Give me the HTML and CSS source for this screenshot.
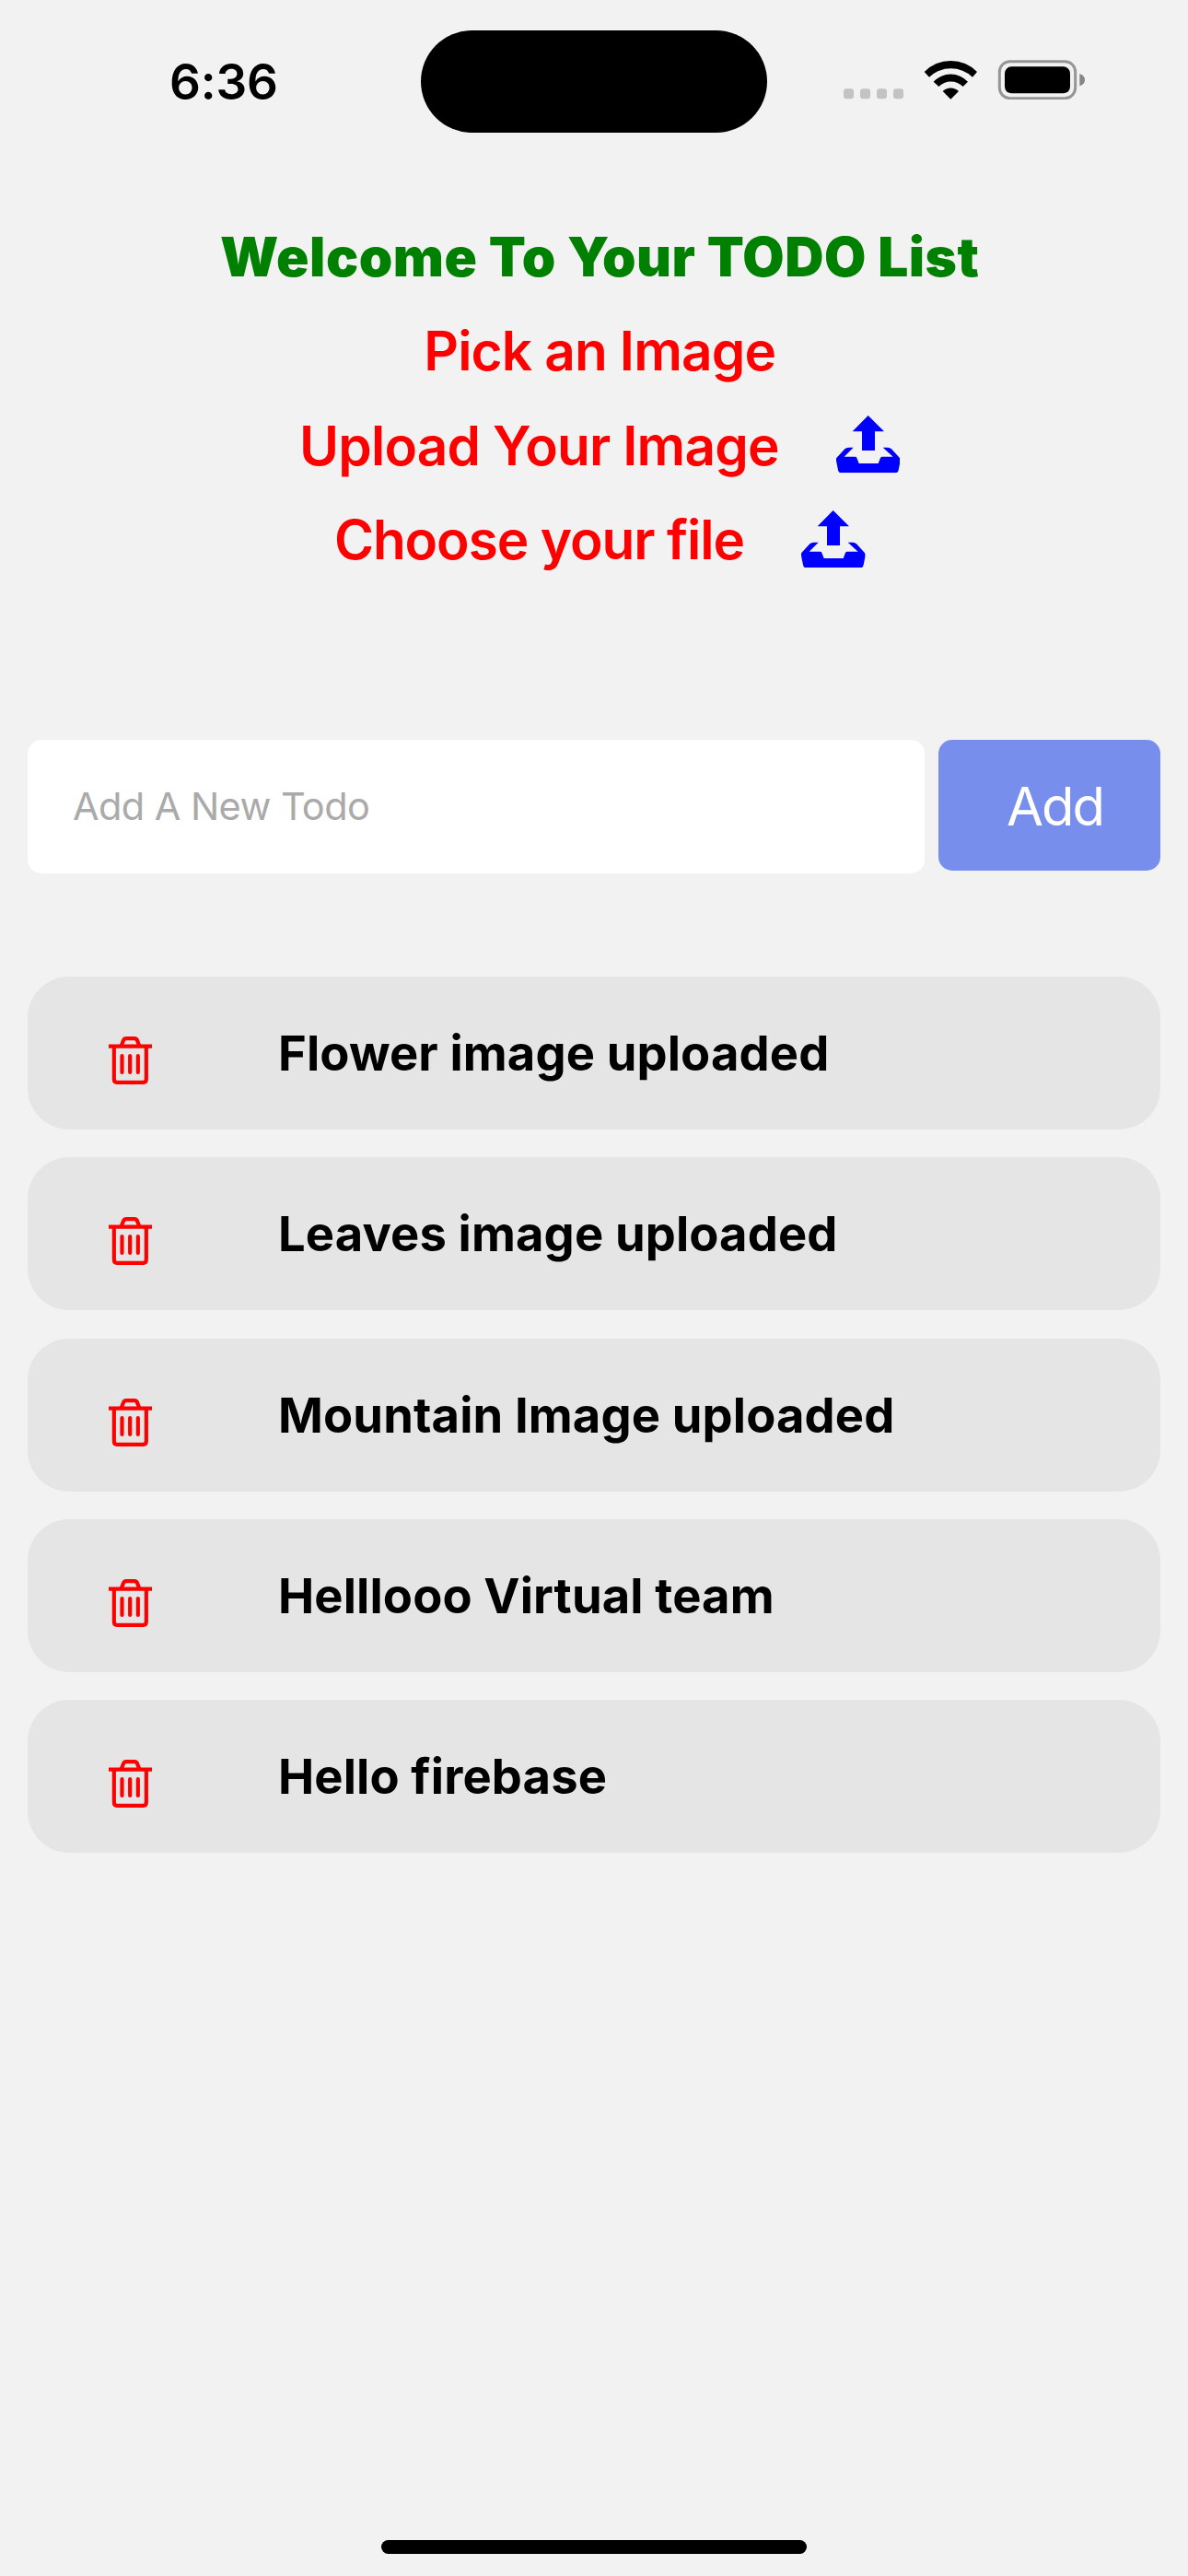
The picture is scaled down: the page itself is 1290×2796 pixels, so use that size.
FILE: index.html
```html
<!DOCTYPE html>
<html lang="en">
<head>
<meta charset="utf-8">
<title>TODO List</title>
<link rel="stylesheet" href="styles.css">
</head>
<body>
<svg class="defs" aria-hidden="true">
  <symbol id="upload" viewBox="0 0 209 187">
    <path d="M104 0L156 52H126V114H84V52H53ZM1 138L28 109Q33 104 40 104H56L26 134H62Q66 134 67 138L74 156H137L144 138Q146 134 150 134H185L152 104H168Q175 104 180 109L206 137Q210 142 209 148L203 178Q201 187 193 187H15Q8 187 6 178L0 148Q-1 142 1 138Z" fill="currentColor"/>
  </symbol>
  <symbol id="trash" viewBox="84 75 141 156">
    <g fill="none" stroke="currentColor" stroke-width="12.5">
      <path d="M84 107H225"/>
      <path d="M101.500 107V213Q101.500 224.500 111 224.500H197Q206.500 224.500 206.500 213V107"/>
      <path d="M125 106L132 88Q135 81.500 141 81.500H168Q175 81.500 177 88L184 106"/>
      <path d="M127.500 138V192M153.500 138V192M179.500 138V192" stroke-linecap="round"/>
    </g>
  </symbol>
</svg>

<header class="status">
  <span class="clock">6:36</span>
  <span class="island"></span>
  <svg class="indicators" viewBox="288 134 786 130">
    <g fill="#c3c3c3">
      <rect x="288" y="228" width="33" height="33" rx="9"/>
      <rect x="342" y="228" width="33" height="33" rx="9"/>
      <rect x="396" y="228" width="33" height="33" rx="9"/>
      <rect x="450" y="228" width="33" height="33" rx="9"/>
    </g>
    <path d="M551 173A120 120 0 0 1 723 173L708 190A103 103 0 0 0 567 190ZM581 205A77 77 0 0 1 693 205L677 221A56 56 0 0 0 598 221ZM611 236A37 37 0 0 1 663 236L637 262Z"/>
    <rect x="796" y="139" width="247" height="120" rx="34" fill="none" stroke="#969696" stroke-width="9"/>
    <rect x="813" y="156" width="213" height="87" rx="22"/>
    <path d="M1057 179Q1074 185 1074 199.500T1057 219Z" fill="#868686"/>
  </svg>
</header>

<main class="screen">
  <section class="intro">
    <h1 class="line title">Welcome To Your TODO List</h1>
    <div class="line pick">Pick an Image</div>
    <div class="line pick">Upload Your Image<svg class="upload"><use href="#upload"/></svg></div>
    <div class="line pick choose">Choose your file<svg class="upload"><use href="#upload"/></svg></div>
  </section>

  <form class="add-form">
    <input class="field" type="text" placeholder="Add A New Todo">
    <button class="add" type="button">Add</button>
  </form>

  <ul class="todos">
    <li class="todo"><svg class="trash"><use href="#trash"/></svg>Flower image uploaded</li>
    <li class="todo"><svg class="trash"><use href="#trash"/></svg>Leaves image uploaded</li>
    <li class="todo"><svg class="trash"><use href="#trash"/></svg>Mountain Image uploaded</li>
    <li class="todo"><svg class="trash"><use href="#trash"/></svg>Helllooo Virtual team</li>
    <li class="todo"><svg class="trash"><use href="#trash"/></svg>Hello firebase</li>
  </ul>
</main>

<footer class="home"><span class="home-bar"></span></footer>
</body>
</html>
```
FILE: styles.css
```css
* { box-sizing: border-box; }

body {
  margin: 0;
  height: 2796px;
  display: flex;
  flex-direction: column;
  background: #f2f2f2;
  color: #000;
  font-family: Inter, "Liberation Sans", sans-serif;
  overflow: hidden;
}

.defs { display: none; }

.status {
  height: 177px;
  padding-left: 184px;
  display: flex;
  align-items: center;
}
.clock {
  width: 273px;
  font-size: 53px;
  font-weight: 600;
  letter-spacing: -0.15px;
  line-height: 64px;
}
.island {
  width: 376px;
  height: 111px;
  border-radius: 56px;
  background: #000;
}
.indicators {
  width: 262px;
  height: 43.333px;
  margin: 0 0 4px 83px;
}

.screen {
  flex: 1;
  padding: 50.400px 30px 0;
}

.intro { padding-left: 12.500px; }
.line {
  height: 102.600px;
  display: flex;
  align-items: center;
  justify-content: center;
  white-space: nowrap;
  font-size: 58.500px;
  line-height: 72px;
}
.title {
  margin: 0;
  color: #008000;
  font-weight: 900;
  letter-spacing: 0.530px;
}
.pick {
  color: #f00;
  font-weight: 600;
  letter-spacing: -0.840px;
}
.choose { letter-spacing: -1.100px; }
.upload {
  width: 69.700px;
  height: 62.300px;
  margin: 0 0 3px 62px;
  color: #00f;
}

.add-form {
  margin-top: 165.200px;
  display: flex;
  align-items: flex-start;
  gap: 15px;
}
.field {
  flex: 1;
  min-width: 0;
  height: 145px;
  padding: 0 0 0 49px;
  border: 0;
  border-radius: 15px;
  background: #fff;
  font: 400 41.500px Inter, "Liberation Sans", sans-serif;
  letter-spacing: -0.590px;
}
.field::placeholder { color: #aaa; opacity: 1; }
.add {
  width: 241px;
  height: 142px;
  padding: 2px 0 0 74px;
  border: 0;
  border-radius: 15px;
  background: #788eec;
  color: #fff;
  font: 400 58px Inter, "Liberation Sans", sans-serif;
  letter-spacing: -2px;
  text-align: left;
}

.todos {
  margin: 112px 0 0;
  padding: 0;
  list-style: none;
  display: grid;
  gap: 30.300px;
}
.todo {
  height: 166px;
  padding-left: 88px;
  display: flex;
  align-items: center;
  border-radius: 45px;
  background: #e5e5e5;
  font-size: 52.500px;
  font-weight: 700;
  letter-spacing: 0.130px;
  white-space: nowrap;
}
.trash {
  width: 47px;
  height: 52px;
  margin: 16px 137px 0 0;
  color: #f00;
}

.home {
  display: flex;
  justify-content: center;
  padding-bottom: 24px;
}
.home-bar {
  width: 462px;
  height: 15px;
  border-radius: 8px;
  background: #000;
}
```
